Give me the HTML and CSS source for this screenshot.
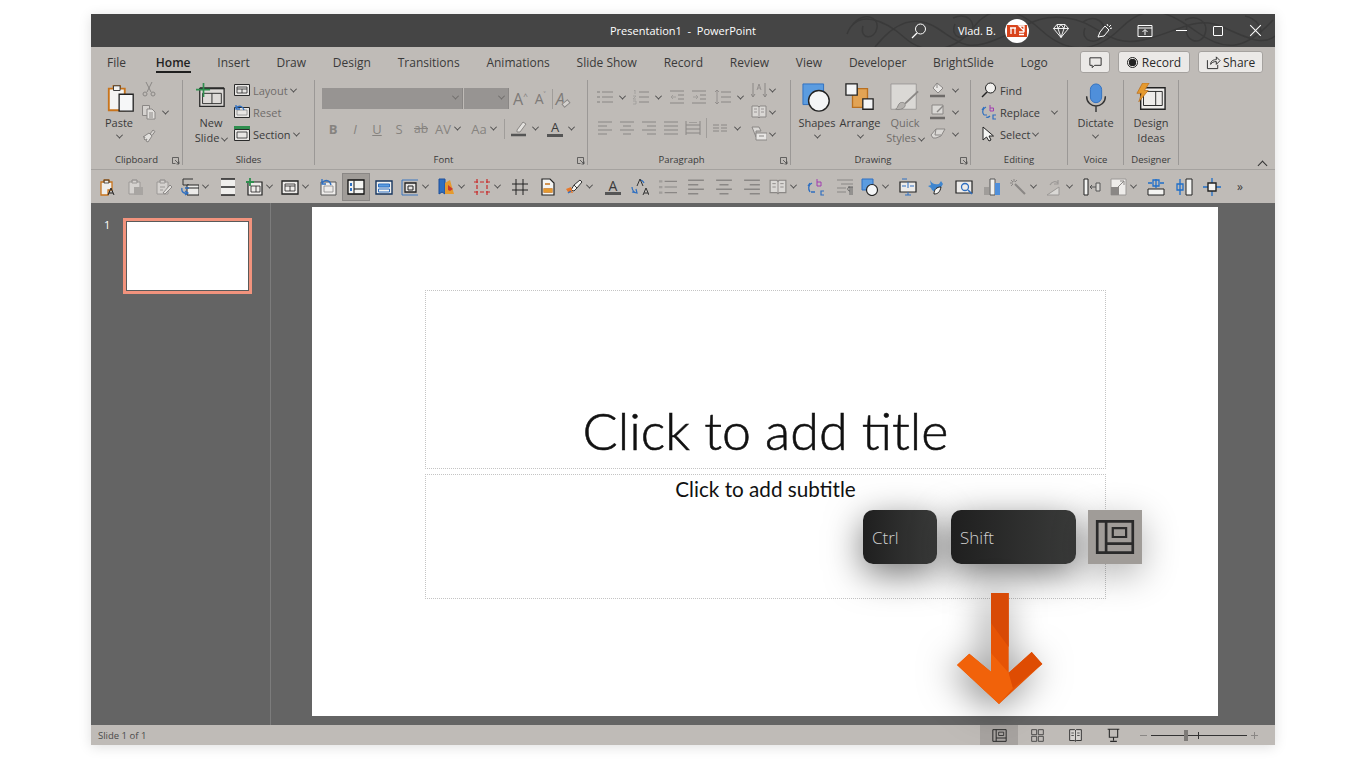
FILE: index.html

```html
<!DOCTYPE html>
<html lang="en">
<head>
    <meta charset="UTF-8">
    <title>Presentation1 - PowerPoint</title>
    <link rel="stylesheet" href="styles.css">
</head>
<body>
    <!-- icon sprites -->
    <svg class="sprites" xmlns="http://www.w3.org/2000/svg">
        <symbol id="paste" viewBox="0 0 32 32"><path d="M3 6h5V3h7v3h5v23H3z" fill="#f4f4f2" stroke="#c8741c" stroke-width="2"/><path d="M8 3h7v5H8z" fill="#f4f4f2" stroke="#333"/><path d="M14 12h15v18H14z" fill="#f6f7f8" stroke="#222" stroke-width="1.4"/></symbol>
        <symbol id="cut" viewBox="0 0 16 16"><path d="M5 1l5 10M11 1L6 11" stroke="#8a8785"/><circle cx="4" cy="13" r="2" stroke="#8a8785"/><circle cx="12" cy="13" r="2" stroke="#8a8785"/></symbol>
        <symbol id="copy" viewBox="0 0 16 16"><path d="M1.500 1.500h7v10h-7z" stroke="#8a8785" fill="#d5d2cf"/><path d="M6 5h5l3 3v7H6z" stroke="#8a8785" fill="#e3e1de"/><path d="M8 9h4M8 11h4M8 13h4" stroke="#8a8785"/></symbol>
        <symbol id="painter" viewBox="0 0 16 16"><path d="M9 7l3-4 2 1.500-3 4z" stroke="#8a8785" fill="#d5d2cf"/><path d="M2 10l6-4 3 3-4 6-2-1 1-2-2 1-1-1 1-2z" stroke="#8a8785" fill="#e3e1de"/></symbol>
        <symbol id="newslide" viewBox="0 0 32 32"><path d="M4 6h26v19H4z" fill="#dedbd8" stroke="#2a2a2a" stroke-width="1.400"/><path d="M4 5.500h26" stroke="#2a2a2a" stroke-width="2"/><path d="M7 11h20v11H7zM17 11v11" stroke="#2a2a2a"/><path d="M8 0v15M0 7h15" stroke="#2f8f4f" stroke-width="1.800"/></symbol>
        <symbol id="layout" viewBox="0 0 16 16"><path d="M.5 2.500h15v11H.5z" fill="#e8e6e4" stroke="#2a2a2a"/><path d="M3 5h10v6H3zM8 7v4M3 7h10" stroke="#2a2a2a" stroke-width=".8"/></symbol>
        <symbol id="reset" viewBox="0 0 16 16"><path d="M.5 3.500h15v10H.5z" fill="#e8e6e4" stroke="#2a2a2a"/><path d="M3 6h10v5H3z" stroke="#888" stroke-width=".8"/><path d="M2 4c3-3 7-2 8 2M2 1v4h4" stroke="#2f6fc0" stroke-width="1.300"/></symbol>
        <symbol id="section" viewBox="0 0 16 16"><path d="M.5 3.500h15v11H.5z" fill="#e8e6e4" stroke="#2a2a2a"/><path d="M3 6h10v6H3z" stroke="#2a2a2a" stroke-width=".8"/><path d="M0 1.500h16" stroke="#2f8f4f" stroke-width="3"/></symbol>
        <symbol id="shapes" viewBox="0 0 32 32"><path d="M1 1h22v22H1z" fill="#5b9ce0" stroke="#2f6fc0"/><circle cx="18" cy="19" r="11" fill="#f4f5f6" stroke="#222" stroke-width="1.500"/></symbol>
        <symbol id="arrange" viewBox="0 0 32 32"><path d="M8 6h16v20H8z" fill="#e2a354" stroke="#b96f1f" stroke-width="1.400"/><path d="M1 1h12v12H1zM19 17h11v11H19z" fill="#f4f5f6" stroke="#222" stroke-width="1.400"/></symbol>
        <symbol id="quick" viewBox="0 0 32 32"><path d="M1 1h27v27H1z" fill="#dad8d5" stroke="#9b9896"/><path d="M30 9L16 22" stroke="#8a8785" stroke-width="2"/><path d="M11 21c4-1 6 1 5 4-2 3-7 4-10 3 3-2 2-5 5-7z" fill="#b5b2af" stroke="#8a8785"/></symbol>
        <symbol id="fill" viewBox="0 0 16 16"><path d="M7 1l6 5-5 5-5-5z" fill="#e8e6e4" stroke="#8a8785"/><path d="M0 14h15" stroke="#6d6a68" stroke-width="2.500"/><path d="M7 1v5" stroke="#8a8785"/></symbol>
        <symbol id="outline" viewBox="0 0 16 16"><path d="M2 1h11v9H2z" fill="#dad8d5" stroke="#8a8785"/><path d="M13 2L7 8" stroke="#8a8785" stroke-width="1.500"/><path d="M0 14h15" stroke="#6d6a68" stroke-width="2.500"/></symbol>
        <symbol id="highlight" viewBox="0 0 16 16"><path d="M6 9l6-8 3 2-6 8-3 0z" fill="#e3e1de" stroke="#8a8785"/><path d="M0 14h15" stroke="#555" stroke-width="2.500"/></symbol>
        <symbol id="effects" viewBox="0 0 16 16"><path d="M1 9l5-6h9l-4 7-5 2H3z" fill="#dad8d5" stroke="#8a8785"/><path d="M6 3l-1 6h6" stroke="#8a8785"/></symbol>
        <symbol id="find" viewBox="0 0 16 16"><circle cx="9.500" cy="6" r="5" fill="#f2f1ef" stroke="#222"/><path d="M6 10l-5 5" stroke="#222" stroke-width="1.500"/></symbol>
        <symbol id="replace" viewBox="0 0 16 16"><path d="M5 3C1 5 1 9 3 11M1 6l2-3M5 13c2 1 3 0 4-1M3 11h3" stroke="#2f6fc0" stroke-width="1.200"/><path d="M9 1v6h3.500V4H9" stroke="#a13cb0"/><path d="M15 11h-3v4h3" stroke="#2f6fc0" stroke-width="1.200"/></symbol>
        <symbol id="select" viewBox="0 0 16 16"><path d="M2 1v13l3.500-3 2.500 4 2-1-2-4h4.500z" fill="#f4f4f2" stroke="#222"/></symbol>
        <symbol id="mic" viewBox="0 0 32 32"><rect x="10" y="1" width="12" height="20" rx="6" fill="#4f8fda" stroke="#2f6fc0"/><path d="M6 14c0 14 20 14 20 0M16 25v6" stroke="#333" stroke-width="1.500"/></symbol>
        <symbol id="ideas" viewBox="0 0 32 32"><path d="M5 5h26v23H5z" fill="#eeecea" stroke="#222" stroke-width="1.500"/><path d="M8 9h20v15H8zM21 9v15" stroke="#222"/><path d="M7 0h7L9 8h4L3 20l3-9H1z" fill="#e59a2e" stroke="#b96f1f" stroke-width=".8"/></symbol>
        <symbol id="launcher" viewBox="0 0 8 8"><path d="M.5.500h6v6M.5.500v6h3M3 3l4 4M7 4.500V7H4.500" stroke="#4a4a4a" stroke-width=".8"/></symbol>
        <symbol id="bullets" viewBox="0 0 16 16"><path d="M5 3h11M5 8h11M5 13h11" stroke="#8a8785"/><path d="M0 2h3v2H0zM0 7h3v2H0zM0 12h3v2H0z" fill="#a09d9a"/></symbol>
        <symbol id="numbers" viewBox="0 0 16 16"><path d="M6 3h10M6 8h10M6 13h10" stroke="#8a8785"/><path d="M1 2l1-1v4M0 7h3L0 10h3M0 12h3v3H0" stroke="#a09d9a" stroke-width=".8"/></symbol>
        <symbol id="indent-less" viewBox="0 0 16 16"><path d="M1 2h14M9 6h6M9 10h6M1 14h14" stroke="#8a8785"/><path d="M7 8H2M4 6L2 8l2 2" stroke="#a09d9a"/></symbol>
        <symbol id="indent-more" viewBox="0 0 16 16"><path d="M1 2h14M9 6h6M9 10h6M1 14h14" stroke="#8a8785"/><path d="M2 8h5M5 6l2 2-2 2" stroke="#a09d9a"/></symbol>
        <symbol id="spacing" viewBox="0 0 16 16"><path d="M6 3h10M6 8h10M6 13h10" stroke="#8a8785"/><path d="M2 1v14M0 3l2-2 2 2M0 13l2 2 2-2" stroke="#8a8785" stroke-width=".8"/></symbol>
        <symbol id="textdir" viewBox="0 0 16 16"><path d="M2 1v14M0 12l2 3 2-3M14 1v14M12 12l2 3 2-3" stroke="#8a8785"/><path d="M6 8l2-6 2 6M7 6h2" stroke="#8a8785" stroke-width=".8"/></symbol>
        <symbol id="book" viewBox="0 0 16 16"><path d="M1 2h6l1 1 1-1h6v11H9l-1 1-1-1H1z" fill="#dad8d5" stroke="#8a8785"/><path d="M8 3v11M3 5h3M3 8h3M10 5h3M10 8h3" stroke="#8a8785" stroke-width=".8"/></symbol>
        <symbol id="smartart" viewBox="0 0 16 16"><path d="M1 1h7l2 4H5v6z" fill="#dad8d5" stroke="#8a8785"/><path d="M5 7h11v7H5z" fill="#e8e6e4" stroke="#8a8785"/><path d="M8 10h5" stroke="#8a8785"/></symbol>
        <symbol id="align-l" viewBox="0 0 16 16"><path d="M1 2h14M1 6h9M1 10h14M1 14h9" stroke="#8a8785" stroke-width="1.200"/></symbol>
        <symbol id="align-c" viewBox="0 0 16 16"><path d="M1 2h14M4 6h8M1 10h14M4 14h8" stroke="#8a8785" stroke-width="1.200"/></symbol>
        <symbol id="align-r" viewBox="0 0 16 16"><path d="M1 2h14M6 6h9M1 10h14M6 14h9" stroke="#8a8785" stroke-width="1.200"/></symbol>
        <symbol id="align-j" viewBox="0 0 16 16"><path d="M1 2h14M1 6h14M1 10h14M1 14h14" stroke="#8a8785" stroke-width="1.200"/></symbol>
        <symbol id="distribute" viewBox="0 0 16 16"><path d="M1 1v14M15 1v14M1 5h14M1 9h14M1 13h14" stroke="#8a8785"/><path d="M4 2.500h8" stroke="#a09d9a"/></symbol>
        <symbol id="columns" viewBox="0 0 16 16"><path d="M1 5h6M9 5h6M1 8h6M9 8h6M1 11h6M9 11h6" stroke="#8a8785"/></symbol>
        <symbol id="paste-a" viewBox="0 0 18 18"><path d="M2 4h3V2h5v2h3v8H9v5H2z" fill="#efeeec" stroke="#c8741c" stroke-width="1.300"/><path d="M5 2h5v3H5z" stroke="#333" stroke-width=".8"/><path d="M9 17l3-7 3 7M10 15h4" stroke="#222"/></symbol>
        <symbol id="paste-g" viewBox="0 0 18 18"><path d="M2 4h3V2h5v2h3v12H2z" fill="#d5d2cf" stroke="#9b9896"/><path d="M5 2h5v3H5z" stroke="#9b9896"/><path d="M7 9h9v8H7z" fill="#a8a5a2"/></symbol>
        <symbol id="paste-e" viewBox="0 0 18 18"><path d="M2 4h3V2h5v2h3v12H2z" fill="#d5d2cf" stroke="#9b9896"/><path d="M5 2h5v3H5zM5 9h5M5 12h3" stroke="#9b9896"/><path d="M8 15l7-8 2 2-7 7z" fill="#e3e1de" stroke="#8a8785"/></symbol>
        <symbol id="switch" viewBox="0 0 18 18"><path d="M2 1h10M2 1v6h6" stroke="#333"/><path d="M6 7h12v10H6z" fill="#ecebe9" stroke="#222"/><path d="M6 10h12" stroke="#222"/><path d="M1 10c-1 4 2 6 6 5M4 17l3-2-3-2M8 10H4" stroke="#2f6fc0" stroke-width="1.300"/></symbol>
        <symbol id="hlines" viewBox="0 0 18 18"><path d="M2 1h14v16H2z" fill="#f0efed"/><path d="M2 1h14M2 9h14M2 17h14" stroke="#222" stroke-width="1.600"/></symbol>
        <symbol id="newslide-s" viewBox="0 0 18 18"><path d="M3 4h14v13H3z" fill="#eeecea" stroke="#222" stroke-width="1.200"/><path d="M6 8h9v6H6zM11 8v6" stroke="#222" stroke-width=".8"/><path d="M5 0v8M1 4h8" stroke="#2f8f4f" stroke-width="1.800"/></symbol>
        <symbol id="layout-s" viewBox="0 0 18 18"><path d="M1 3h16v13H1z" fill="#eeecea" stroke="#222" stroke-width="1.300"/><path d="M4 6h10v7H4zM9 8v5M4 8h10" stroke="#222" stroke-width=".8"/></symbol>
        <symbol id="reset-s" viewBox="0 0 18 18"><path d="M2 4h15v13H2z" fill="#eeecea" stroke="#555"/><path d="M5 8h9v6H5z" stroke="#888" stroke-width=".8"/><path d="M3 5c3-4 8-3 9 2M3 1v5h4" stroke="#2f6fc0" stroke-width="1.300"/></symbol>
        <symbol id="slot" viewBox="0 0 18 18"><path d="M1 2h16v14H1z" fill="#f4f4f2" stroke="#111" stroke-width="1.300"/><path d="M7 2.500v13" stroke="#111"/><path d="M3 5h2v3H3zM3 10h2v3H3z" fill="#2f6fc0"/><path d="M7 11h10" stroke="#111"/></symbol>
        <symbol id="bluebox" viewBox="0 0 18 18"><path d="M1 3h16v13H1z" fill="#f1f1ef" stroke="#17365f" stroke-width="1.400"/><path d="M3.500 6h11v3h-11z" fill="#5b9ce0" stroke="#2f6fc0"/><path d="M3.500 11h11v3h-11z" fill="#f4f4f2" stroke="#2f6fc0"/></symbol>
        <symbol id="frame" viewBox="0 0 18 18"><path d="M1 2h16M1 17h16M1 2v15" stroke="#2f6fc0" stroke-width=".9"/><path d="M4 5h11v9H4z" fill="#e8e6e4" stroke="#222" stroke-width="1.300"/><path d="M7 8h5v4H7z" stroke="#222"/></symbol>
        <symbol id="bookmark" viewBox="0 0 18 18"><path d="M2 1h6v15l-3-2-3 2z" fill="#2f6fc0" stroke="#1f4f99"/><path d="M8 5l5-3 4 14H8z" fill="#e59a2e"/><path d="M11 7l5 4-3 2-2-1z" fill="#c83a2e"/></symbol>
        <symbol id="crop" viewBox="0 0 18 18"><path d="M4 1v16M14 1v16M1 4h16M1 14h16" stroke="#c92a2a" stroke-width="1.200" stroke-dasharray="4 2"/></symbol>
        <symbol id="hash" viewBox="0 0 18 18"><path d="M5 1v16M12 1v16M1 6h16M1 12h16" stroke="#222"/></symbol>
        <symbol id="doc-o" viewBox="0 0 18 18"><path d="M3 1h8l4 4v12H3z" fill="#f4f4f2" stroke="#222" stroke-width="1.200"/><path d="M6 6h5M5 11h8v3H5z" stroke="#c8741c" stroke-width="1.300"/><path d="M5 11h8v3H5z" fill="#e59a2e"/></symbol>
        <symbol id="brush-c" viewBox="0 0 18 18"><path d="M9 7l6-5 2 2-5 6z" fill="#f4f4f2" stroke="#333"/><path d="M9 7l3 3-3 3-3-1z" fill="#f4f4f2" stroke="#333"/><path d="M1 11l5-2 2 6-5-1z" fill="#e8782a"/><path d="M3 15l3-2" stroke="#2f6fc0" stroke-width="1.500"/></symbol>
        <symbol id="translate" viewBox="0 0 18 18"><path d="M1 9c0 3 2 6 5 6M1 14l5 1-1-4M9 2c2 0 3 1 4 3" stroke="#2f6fc0" stroke-width="1.200"/><path d="M6 8l3-7 3 7M12 17l3-7 3 7M13 15h4" stroke="#333"/></symbol>
        <symbol id="replace-q" viewBox="0 0 18 18"><path d="M5 5C1 7 1 11 3 14M1 8l2-3M4 14h4" stroke="#2f6fc0" stroke-width="1.300"/><path d="M10 1v7h4V4h-4" stroke="#a13cb0"/><path d="M17 13h-3v4h3" stroke="#2f6fc0" stroke-width="1.200"/></symbol>
        <symbol id="para" viewBox="0 0 18 18"><path d="M2 2h16M6 6h12M2 10h9M2 14h9" stroke="#8a8785" stroke-width="1.200"/><path d="M13 9h5M15 9v8M17 9v8M15 13c-3 0-3-4 0-4" stroke="#666"/></symbol>
        <symbol id="shapes-s" viewBox="0 0 18 18"><path d="M1 1h11v11H1z" fill="#5b9ce0" stroke="#2f6fc0"/><circle cx="11" cy="12" r="5.500" fill="#f4f5f6" stroke="#222" stroke-width="1.200"/></symbol>
        <symbol id="monitor" viewBox="0 0 18 18"><path d="M1 4h16v10H1z" fill="#eeecea" stroke="#222" stroke-width="1.200"/><path d="M3 1h5M9 14v3M6 17h6" stroke="#2f6fc0"/><path d="M9 4v6M3 8h4M11 8h4" stroke="#2f6fc0"/></symbol>
        <symbol id="bird" viewBox="0 0 18 18"><path d="M3 2c2 4 5 5 9 4l2-3 2 3-3 5c-3 4-8 3-9-1L1 8l3-1z" fill="#3f86cf"/><path d="M7 16c0-5 3-7 7-7-1 5-3 7-7 7z" fill="#f4f4f2" stroke="#222"/></symbol>
        <symbol id="picsearch" viewBox="0 0 18 18"><path d="M1 3h16v12H1z" fill="#eeecea" stroke="#222" stroke-width="1.200"/><circle cx="10" cy="9" r="3.500" stroke="#2f6fc0" stroke-width="1.300"/><path d="M13 12l4 4" stroke="#2f6fc0" stroke-width="1.600"/></symbol>
        <symbol id="chart" viewBox="0 0 18 18"><path d="M1 9h5v8H1z" fill="#a09d9a"/><path d="M7 1h5v16H7z" fill="#f1f1ef" stroke="#555"/><path d="M12 5h5v12h-5z" fill="#4f8fda"/></symbol>
        <symbol id="wand" viewBox="0 0 18 18"><path d="M6 6l10 10" stroke="#8a8785" stroke-width="2"/><path d="M5 1v3M1 5h3M8 2L6 4M2 2l2 2M2 8l2-2" stroke="#8a8785"/></symbol>
        <symbol id="flip" viewBox="0 0 18 18"><path d="M2 17L14 9v8z" fill="#dad8d5" stroke="#9b9896"/><path d="M5 7c2-4 6-4 8-2M13 2v4H9" stroke="#9b9896" stroke-width="1.200"/></symbol>
        <symbol id="coldist" viewBox="0 0 18 18"><path d="M1 1h4v16H1z" fill="#f4f4f2" stroke="#222"/><path d="M8 9h5M7 9l2-2M7 9l2 2" stroke="#555"/><path d="M13 5h4v8h-4z" fill="#dad8d5" stroke="#555"/></symbol>
        <symbol id="resize" viewBox="0 0 18 18"><path d="M2 1h15v16H2z" fill="#eeecea" stroke="#9b9896"/><path d="M2 9h8v8H2z" fill="#8a8785"/><path d="M9 9l6-6M11 3h4v4" stroke="#8a8785"/></symbol>
        <symbol id="align-b" viewBox="0 0 18 18"><path d="M1 11h16v6H1z" fill="#f4f4f2" stroke="#222"/><path d="M9 1v9M6 2h6v6H6zM1 5h4M13 5h4" stroke="#1f6fc9" stroke-width="1.300"/></symbol>
        <symbol id="align-v" viewBox="0 0 18 18"><path d="M11 1h6v16h-6z" fill="#f4f4f2" stroke="#222"/><path d="M5 1v16M2 6h6v6H2z" stroke="#1f6fc9" stroke-width="1.300"/></symbol>
        <symbol id="target" viewBox="0 0 18 18"><path d="M9 0v18M0 9h18" stroke="#1f6fc9" stroke-width="1.300"/><path d="M5 5h8v8H5z" fill="#f4f4f2" stroke="#222" stroke-width="1.400"/></symbol>
        <symbol id="normal" viewBox="0 0 18 18"><path d="M1 2h16v14H1zM5 2v14M5 12h12" stroke="#2a2a2a" stroke-width="1.200"/><path d="M8 5h6v4H8z" stroke="#2a2a2a" stroke-width="1"/></symbol>
        <symbol id="sorter" viewBox="0 0 18 18"><path d="M2 2h6v6H2zM10 2h6v6h-6zM2 10h6v6H2zM10 10h6v6h-6z" stroke="#3a3a3a"/></symbol>
        <symbol id="reading" viewBox="0 0 18 18"><path d="M2 2h6l1 1 1-1h6v13h-6l-1 1-1-1H2z" fill="#d5d2cf" stroke="#2a2a2a" stroke-width="1.100"/><path d="M9 3v13M4 6h3M4 9h3M11 6h3M11 9h3" stroke="#2a2a2a" stroke-width=".9"/></symbol>
        <symbol id="show" viewBox="0 0 18 18"><path d="M2 1.500h14M4 2v9h10V2M9 11v4M5 16h8" stroke="#2a2a2a" stroke-width="1.300"/></symbol>
        <symbol id="tb-search" viewBox="0 0 16 16"><circle cx="9.500" cy="6" r="5" stroke="#fff"/><path d="M6 10l-5 5" stroke="#fff" stroke-width="1.300"/></symbol>
        <symbol id="tb-diamond" viewBox="0 0 16 16"><path d="M4 1.500h8l3.500 4L8 14.500.5 5.500zM.5 5.500h15M5 5.500l3 9 3-9M4 1.500l1 4 3-4 3 4 1-4" stroke="#fff" stroke-width=".9"/></symbol>
        <symbol id="tb-pen" viewBox="0 0 16 16"><path d="M1 14l2-5 5-6 4 4-5 6zM10 1l1 2M14 2l-2 2M15 5l-2 .500" stroke="#fff"/></symbol>
        <symbol id="tb-display" viewBox="0 0 16 16"><path d="M1 2.500h14v11H1zM1 5h14" stroke="#fff"/><path d="M8 12V7M5.500 9L8 6.500 10.500 9" stroke="#fff"/></symbol>
        <symbol id="tb-office" viewBox="0 0 20 16"><path d="M0 2h20v12H0z" fill="#d9441c"/><path d="M3 5h6M4 5v6M8 5v6M12 3h5v5l-5-5zM12 9h5M12 11.500h5" stroke="#fff" stroke-width="1.300"/></symbol>
        <symbol id="comment" viewBox="0 0 16 16"><path d="M2 3h12v8H7l-2.500 2.500V11H2z" stroke="#2a2a2a"/></symbol>
        <symbol id="share" viewBox="0 0 16 16"><path d="M1.500 5.500v9h11v-4M5 10c0-4 3-5 6-5V2l4 4-4 4V7c-3 0-5 1-6 3z" stroke="#2a2a2a"/></symbol>
    </svg>

    <div class="window">
        <div class="titlebar">
            <svg class="title-pattern" viewBox="0 0 430 33" preserveAspectRatio="none">
                <path d="M2 20C12-6 40 6 60 24S110 38 128 14 170-8 196 16 250 40 276 14 322-4 352 18 402 34 428 6" />
                <path d="M30 33C50 8 70 0 92 14S120 38 150 26 190 0 222 4 262 34 298 26 350 0 380 14 420 30 430 22" />
                <path d="M8 10c10-12 26-8 24 4S14 26 18 12M108 4c14-6 24 4 18 14s-22 6-16-8M238 8c12-8 24 0 20 12s-24 8-18-6M340 6c12-6 24 2 20 14s-22 8-18-8M400 2c10 2 20 12 14 22" />
            </svg>
            <div class="doc-title">Presentation1 &nbsp;-&nbsp; PowerPoint</div>
            <div class="title-controls">
                <svg class="tb-icon tb-search"><use href="#tb-search"/></svg>
                <span class="user-name">Vlad. B.</span>
                <span class="avatar"><svg class="avatar-logo"><use href="#tb-office"/></svg></span>
                <svg class="tb-icon tb-diamond"><use href="#tb-diamond"/></svg>
                <svg class="tb-icon tb-pen"><use href="#tb-pen"/></svg>
                <svg class="tb-icon tb-display"><use href="#tb-display"/></svg>
                <span class="win-min"></span>
                <span class="win-max"></span>
                <span class="win-close"></span>
            </div>
        </div>

        <div class="tabbar">
            <nav class="tabs">
                <span class="tab">File</span>
                <span class="tab active">Home</span>
                <span class="tab">Insert</span>
                <span class="tab">Draw</span>
                <span class="tab">Design</span>
                <span class="tab">Transitions</span>
                <span class="tab">Animations</span>
                <span class="tab">Slide Show</span>
                <span class="tab">Record</span>
                <span class="tab">Review</span>
                <span class="tab">View</span>
                <span class="tab">Developer</span>
                <span class="tab">BrightSlide</span>
                <span class="tab">Logo</span>
            </nav>
            <div class="tab-actions">
                <button class="pill pill-comment"><svg class="i15"><use href="#comment"/></svg></button>
                <button class="pill pill-record"><span class="rec-dot"></span>Record</button>
                <button class="pill pill-share"><svg class="i15"><use href="#share"/></svg>Share</button>
            </div>
        </div>

        <div class="ribbon">
            <section class="group g-clipboard">
                <div class="group-body">
                    <div class="big-btn b-paste">
                        <svg class="i30"><use href="#paste"/></svg>
                        <span>Paste</span>
                        <i class="caret"></i>
                    </div>
                    <div class="stack stack-clip">
                        <svg class="i16"><use href="#cut"/></svg>
                        <span class="row"><svg class="i16"><use href="#copy"/></svg><i class="caret"></i></span>
                        <svg class="i16"><use href="#painter"/></svg>
                    </div>
                </div>
                <div class="group-label">Clipboard</div>
                <svg class="launcher"><use href="#launcher"/></svg>
            </section>

            <section class="group g-slides">
                <div class="group-body">
                    <div class="big-btn b-new">
                        <svg class="i30"><use href="#newslide"/></svg>
                        <span>New</span>
                        <span>Slide <i class="caret"></i></span>
                    </div>
                    <div class="stack stack-slides">
                        <span class="row muted"><svg class="i16"><use href="#layout"/></svg>Layout <i class="caret"></i></span>
                        <span class="row muted"><svg class="i16"><use href="#reset"/></svg>Reset</span>
                        <span class="row"><svg class="i16"><use href="#section"/></svg>Section <i class="caret"></i></span>
                    </div>
                </div>
                <div class="group-label">Slides</div>
            </section>

            <section class="group g-font">
                <div class="font-grid">
                    <div class="font-row">
                        <div class="combo combo-name"><i class="caret"></i></div>
                        <div class="combo combo-size"><i class="caret"></i></div>
                        <span class="glyph glyph-grow">A<sup>^</sup></span>
                        <span class="glyph glyph-shrink">A<sup>˅</sup></span>
                        <span class="v-sep"></span>
                        <span class="glyph glyph-clear">A<i class="eraser"></i></span>
                    </div>
                    <div class="font-row font-row-2">
                        <b class="fmt">B</b>
                        <em class="fmt">I</em>
                        <u class="fmt">U</u>
                        <span class="fmt">S</span>
                        <s class="fmt fmt-small">ab</s>
                        <span class="fmt fmt-av">AV</span><i class="caret"></i>
                        <span class="fmt fmt-aa">Aa</span><i class="caret"></i>
                        <span class="v-sep v-sep-2"></span>
                        <span class="row swatch-tool"><svg class="i16"><use href="#highlight"/></svg><i class="caret"></i></span>
                        <span class="row swatch-tool"><span class="font-color">A</span><i class="caret"></i></span>
                    </div>
                </div>
                <div class="group-label has-launcher">Font</div>
                <svg class="launcher"><use href="#launcher"/></svg>
            </section>

            <section class="group g-para">
                <div class="group-body">
                    <div class="para-left">
                        <div class="row para-row">
                            <svg class="i16"><use href="#bullets"/></svg><i class="caret"></i>
                            <svg class="i16 gap-l"><use href="#numbers"/></svg><i class="caret"></i>
                            <svg class="i16 gap-l"><use href="#indent-less"/></svg>
                            <svg class="i16 gap-m"><use href="#indent-more"/></svg>
                            <svg class="i16 gap-l"><use href="#spacing"/></svg><i class="caret"></i>
                        </div>
                        <div class="row para-row para-row-2">
                            <svg class="i16"><use href="#align-l"/></svg>
                            <svg class="i16 gap-m"><use href="#align-c"/></svg>
                            <svg class="i16 gap-m"><use href="#align-r"/></svg>
                            <svg class="i16 gap-m"><use href="#align-j"/></svg>
                            <svg class="i16 gap-m"><use href="#distribute"/></svg>
                            <span class="v-sep v-sep-3"></span>
                            <svg class="i16"><use href="#columns"/></svg><i class="caret"></i>
                        </div>
                    </div>
                    <div class="stack stack-para">
                        <span class="row"><svg class="i16"><use href="#textdir"/></svg><i class="caret"></i></span>
                        <span class="row"><svg class="i16"><use href="#book"/></svg><i class="caret"></i></span>
                        <span class="row"><svg class="i16"><use href="#smartart"/></svg><i class="caret"></i></span>
                    </div>
                </div>
                <div class="group-label has-launcher">Paragraph</div>
                <svg class="launcher"><use href="#launcher"/></svg>
            </section>

            <section class="group g-drawing">
                <div class="group-body">
                    <div class="big-btn b-shapes">
                        <svg class="i30"><use href="#shapes"/></svg>
                        <span>Shapes</span>
                        <i class="caret"></i>
                    </div>
                    <div class="big-btn b-arrange">
                        <svg class="i30"><use href="#arrange"/></svg>
                        <span>Arrange</span>
                        <i class="caret"></i>
                    </div>
                    <div class="big-btn b-quick muted">
                        <svg class="i30"><use href="#quick"/></svg>
                        <span>Quick</span>
                        <span>Styles <i class="caret"></i></span>
                    </div>
                    <div class="stack stack-draw">
                        <span class="row"><svg class="i16"><use href="#fill"/></svg><i class="caret"></i></span>
                        <span class="row"><svg class="i16"><use href="#outline"/></svg><i class="caret"></i></span>
                        <span class="row"><svg class="i16"><use href="#effects"/></svg><i class="caret"></i></span>
                    </div>
                </div>
                <div class="group-label has-launcher">Drawing</div>
                <svg class="launcher"><use href="#launcher"/></svg>
            </section>

            <section class="group g-editing">
                <div class="stack stack-edit">
                    <span class="row"><svg class="i16"><use href="#find"/></svg>Find</span>
                    <span class="row"><svg class="i16"><use href="#replace"/></svg>Replace <i class="caret caret-far"></i></span>
                    <span class="row"><svg class="i16"><use href="#select"/></svg>Select <i class="caret"></i></span>
                </div>
                <div class="group-label">Editing</div>
            </section>

            <section class="group g-voice">
                <div class="big-btn">
                    <svg class="i30"><use href="#mic"/></svg>
                    <span>Dictate</span>
                    <i class="caret"></i>
                </div>
                <div class="group-label">Voice</div>
            </section>

            <section class="group g-designer">
                <div class="big-btn">
                    <svg class="i30"><use href="#ideas"/></svg>
                    <span>Design</span>
                    <span>Ideas</span>
                </div>
                <div class="group-label">Designer</div>
            </section>

            <i class="ribbon-collapse"></i>
        </div>

        <div class="qat">
            <span class="q"><svg><use href="#paste-a"/></svg></span>
            <span class="q"><svg><use href="#paste-g"/></svg></span>
            <span class="q"><svg><use href="#paste-e"/></svg></span>
            <span class="q qc"><svg><use href="#switch"/></svg><i class="caret"></i></span>
            <span class="q"><svg><use href="#hlines"/></svg></span>
            <span class="q qc"><svg><use href="#newslide-s"/></svg><i class="caret"></i></span>
            <span class="q qc"><svg><use href="#layout-s"/></svg><i class="caret"></i></span>
            <span class="q"><svg><use href="#reset-s"/></svg></span>
            <span class="q q-on"><svg><use href="#slot"/></svg></span>
            <span class="q"><svg><use href="#bluebox"/></svg></span>
            <span class="q qc"><svg><use href="#frame"/></svg><i class="caret"></i></span>
            <span class="q qc"><svg><use href="#bookmark"/></svg><i class="caret"></i></span>
            <span class="q qc"><svg><use href="#crop"/></svg><i class="caret"></i></span>
            <span class="q"><svg><use href="#hash"/></svg></span>
            <span class="q"><svg><use href="#doc-o"/></svg></span>
            <span class="q qc"><svg><use href="#brush-c"/></svg><i class="caret"></i></span>
            <span class="q"><span class="font-color font-color-q">A</span></span>
            <span class="q"><svg><use href="#translate"/></svg></span>
            <span class="q"><svg><use href="#bullets"/></svg></span>
            <span class="q"><svg><use href="#align-l"/></svg></span>
            <span class="q"><svg><use href="#align-c"/></svg></span>
            <span class="q"><svg><use href="#align-r"/></svg></span>
            <span class="q qc"><svg><use href="#book"/></svg><i class="caret"></i></span>
            <span class="q"><svg><use href="#replace-q"/></svg></span>
            <span class="q"><svg><use href="#para"/></svg></span>
            <span class="q qc"><svg><use href="#shapes-s"/></svg><i class="caret"></i></span>
            <span class="q"><svg><use href="#monitor"/></svg></span>
            <span class="q"><svg><use href="#bird"/></svg></span>
            <span class="q"><svg><use href="#picsearch"/></svg></span>
            <span class="q"><svg><use href="#chart"/></svg></span>
            <span class="q qc"><svg><use href="#wand"/></svg><i class="caret"></i></span>
            <span class="q qc"><svg><use href="#flip"/></svg><i class="caret"></i></span>
            <span class="q"><svg><use href="#coldist"/></svg></span>
            <span class="q qc"><svg><use href="#resize"/></svg><i class="caret"></i></span>
            <span class="q"><svg><use href="#align-b"/></svg></span>
            <span class="q"><svg><use href="#align-v"/></svg></span>
            <span class="q"><svg><use href="#target"/></svg></span>
            <span class="q q-more">»</span>
        </div>

        <div class="workspace">
            <aside class="thumbs">
                <span class="thumb-num">1</span>
                <div class="thumb"></div>
            </aside>
            <main class="stage">
                <div class="slide">
                    <div class="ph ph-title">Click to add title</div>
                    <div class="ph ph-sub">Click to add subtitle</div>
                </div>
            </main>
        </div>

        <footer class="statusbar">
            <span class="status-text">Slide 1 of 1</span>
            <div class="status-views">
                <span class="view view-on"><svg class="i15"><use href="#normal"/></svg></span>
                <span class="view"><svg class="i15"><use href="#sorter"/></svg></span>
                <span class="view"><svg class="i15"><use href="#reading"/></svg></span>
                <span class="view"><svg class="i15"><use href="#show"/></svg></span>
            </div>
            <div class="zoom">
                <span class="zoom-btn"></span>
                <div class="zoom-track"><i class="zoom-thumb"></i><i class="zoom-tick"></i></div>
                <span class="zoom-btn zoom-plus"></span>
            </div>
        </footer>
    </div>

    <!-- overlay: shortcut keys and arrow, they sit above the window -->
    <div class="shortcut">
        <span class="key key-ctrl">Ctrl</span>
        <span class="key key-shift">Shift</span>
        <span class="key-icon"><svg><use href="#normal"/></svg></span>
    </div>
    <svg class="big-arrow" viewBox="0 0 86 112">
        <path d="M34 0h17.700v79.700L74.700 59l10.600 12L42 111 0 72l12.300-11.300L34 78.700z" fill="#e65405"/>
        <path d="M34 0h17.700v54L34 30z" fill="#d84a06"/>
        <path d="M0 72l12.300-11.300L34 78.700V60l17.700 19.700L56 95l-14 16z" fill="#f1620a"/>
        <path d="M51.700 79.700L74.700 59l10.600 12L56 95z" fill="#de4c03"/>
    </svg>
</body>
</html>
```

FILE: styles.css

```css
* {
    margin: 0;
    padding: 0;
    box-sizing: border-box;
}
html, body {
    height: 100%;
    overflow: hidden;
}
body {
    background: #fff;
    font-family: 'Open Sans', 'Noto Sans', sans-serif;
    font-size: 11px;
    color: #3a3a3a;
    padding: 14px 91px 0;
}
svg {
    fill: none;
    display: block;
    flex: none;
}
.sprites {
    display: none;
}
.i15 { width: 15px; height: 15px; }
.i16 { width: 16px; height: 16px; }
.i30 { width: 30px; height: 30px; }

.caret {
    display: inline-block;
    flex: none;
    width: 5px;
    height: 5px;
    border-right: 1px solid #4a4a4a;
    border-bottom: 1px solid #4a4a4a;
    transform: rotate(45deg) translate(-1px, -1px);
}

.window {
    width: 1184px;
    height: 731px;
    display: flex;
    flex-direction: column;
    background: #646464;
    box-shadow: 0 2px 12px rgba(0, 0, 0, 0.13);
}

/* title bar */
.titlebar {
    position: relative;
    height: 33px;
    flex: none;
    display: flex;
    align-items: center;
    background: #454545;
    color: #fff;
    padding-left: 519px;
}
.title-pattern {
    position: absolute;
    right: 0;
    top: 0;
    width: 430px;
    height: 33px;
}
.title-pattern path {
    stroke: #3a3a3a;
    stroke-width: 1.5;
}
.doc-title {
    position: relative;
    font-size: 11px;
}
.title-controls {
    position: relative;
    display: flex;
    align-items: center;
    flex: 1;
}
.tb-icon {
    width: 16px;
    height: 16px;
}
.tb-search { margin-left: 155px; }
.user-name { margin-left: 31px; font-size: 11px; }
.avatar {
    width: 24px;
    height: 24px;
    border-radius: 50%;
    background: #fff;
    margin-left: 9px;
    display: flex;
    align-items: center;
    justify-content: center;
}
.avatar-logo {
    width: 20px;
    height: 16px;
}
.tb-diamond { margin-left: 24px; }
.tb-pen { margin-left: 28px; }
.tb-display { margin-left: 24px; }
.win-min {
    width: 11px;
    height: 1px;
    background: #fff;
    margin-left: 23px;
}
.win-max {
    width: 10px;
    height: 10px;
    border: 1px solid #fff;
    border-radius: 1px;
    margin-left: 26px;
}
.win-close {
    position: relative;
    width: 11px;
    height: 11px;
    margin-left: 27px;
}
.win-close::before,
.win-close::after {
    content: "";
    position: absolute;
    left: -2px;
    top: 5px;
    width: 15px;
    height: 1px;
    background: #fff;
    transform: rotate(45deg);
}
.win-close::after {
    transform: rotate(-45deg);
}

/* tabs */
.tabbar {
    height: 30px;
    flex: none;
    display: flex;
    justify-content: space-between;
    background: #bfbbb7;
    padding: 0 12px 0 16px;
}
.tabs {
    display: flex;
    gap: 26.8px;
    font-size: 12px;
}
.tab {
    line-height: 31px;
    height: 26px;
    white-space: nowrap;
}
.tab.active {
    font-weight: 600;
    color: #222;
    border-bottom: 2.5px solid #1f1f1f;
    margin-left: 3px;
}
.tab-actions {
    display: flex;
    gap: 8px;
    padding-top: 4px;
}
.pill {
    height: 22px;
    display: flex;
    align-items: center;
    justify-content: center;
    gap: 4px;
    font: inherit;
    font-size: 12px;
    color: #2a2a2a;
    background: #ebe9e7;
    border: 1px solid #a5a29f;
    border-radius: 3px;
}
.pill-comment { width: 30px; }
.pill-record { width: 72px; }
.pill-share {
    width: 65px;
    justify-content: flex-start;
    padding-left: 7px;
    gap: 2px;
}
.rec-dot {
    width: 11px;
    height: 11px;
    border-radius: 50%;
    border: 1px solid #222;
    background: radial-gradient(circle, #222 3.5px, transparent 4px);
}

/* ribbon */
.ribbon {
    position: relative;
    height: 93px;
    flex: none;
    display: flex;
    background: #bfbbb7;
    padding: 3px 0 0 0;
    border-bottom: 1px solid #a5a29f;
}
.group {
    position: relative;
    height: 85px;
    flex: none;
    border-right: 1px solid #9b9896;
}
.group-label {
    position: absolute;
    left: 0;
    right: 0;
    bottom: -2px;
    text-align: center;
    font-size: 9.5px;
    line-height: 14px;
}
.has-launcher {
    padding-right: 15px;
}
.launcher {
    position: absolute;
    right: 2px;
    bottom: 0;
    width: 8px;
    height: 8px;
}
.group-body {
    display: flex;
    height: 70px;
}
.g-clipboard { width: 92px; }
.g-slides { width: 132px; }
.g-font { width: 273px; }
.g-para { width: 203px; }
.g-drawing { width: 180px; }
.g-editing { width: 97px; }
.g-voice { width: 56px; }
.g-designer { width: 55px; }

.big-btn {
    display: flex;
    flex-direction: column;
    align-items: center;
    line-height: 15px;
    font-size: 11px;
    white-space: nowrap;
}
.big-btn .i30 {
    margin-top: 3px;
    margin-bottom: 2px;
}
.big-btn > .caret {
    margin-top: 4px;
}
.muted {
    color: #6f6c6a;
}
.b-paste { width: 44px; margin-left: 6px; }
.b-paste .i30 { margin-left: 4px; }
.b-new { width: 54px; margin-left: 1px; }
.b-shapes { width: 42px; margin-left: 5px; }
.b-arrange { width: 44px; }
.b-quick { width: 44px; margin-left: 1px; }
.g-voice .big-btn,
.g-designer .big-btn {
    width: 100%;
}

.row {
    display: flex;
    align-items: center;
    gap: 3px;
    white-space: nowrap;
}
.stack {
    display: flex;
    flex-direction: column;
    justify-content: space-between;
}
.stack-clip {
    height: 62px;
    padding-top: 1px;
    box-sizing: content-box;
}
.stack-clip .row { gap: 6px; }
.stack-slides {
    height: 62px;
    padding-top: 2px;
    margin-left: -4px;
}
.stack-para {
    height: 60px;
    margin: 2px 0 0 2px;
}
.stack-para .row { gap: 3px; }
.stack-draw {
    height: 60px;
    margin: 2px 0 0 3px;
}
.stack-draw .row { gap: 7px; }
.stack-edit {
    height: 60px;
    margin: 2px 0 0 10px;
}
.caret-far { margin-left: 9px; }

/* font group */
.font-grid {
    padding: 8px 0 0 7px;
}
.font-row {
    display: flex;
    align-items: center;
    height: 21px;
    color: #86837f;
}
.font-row > * {
    flex: none;
}
.font-row-2 {
    margin-top: 9px;
}
.combo {
    position: relative;
    height: 21px;
    background: #979492;
    border-right: 1px solid #8a8785;
    margin-right: 1px;
}
.combo .caret {
    position: absolute;
    right: 4px;
    top: 7px;
    border-color: #6f6c6a;
}
.combo-name { width: 141px; }
.combo-size { width: 45px; }
.glyph {
    font-size: 16px;
    color: #7d7a77;
}
.glyph sup {
    font-size: 8px;
    line-height: 0;
    vertical-align: 6px;
}
.glyph-grow { margin-left: 3px; }
.glyph-shrink { margin-left: 7px; font-size: 14px; }
.glyph-clear { position: relative; margin-left: 3px; font-style: italic; }
.eraser {
    position: absolute;
    right: -5px;
    bottom: 4px;
    width: 8px;
    height: 5px;
    background: #d5d2cf;
    border: 1px solid #8a8785;
    transform: rotate(-40deg);
}
.v-sep {
    width: 1px;
    height: 20px;
    background: #a09d9a;
    margin-left: 6px;
}
.fmt {
    width: 22px;
    text-align: center;
    font-size: 13px;
}
.fmt-small { font-size: 12px; }
.fmt-av { margin-right: 1px; }
.fmt-aa { margin-left: 8px; margin-right: 1px; }
.v-sep-2 { margin-left: 8px; margin-right: 6px; }
.swatch-tool { gap: 6px; margin-right: 9px; }
.font-color {
    width: 16px;
    text-align: center;
    font-size: 13px;
    line-height: 13px;
    color: #3a3a3a;
    border-bottom: 3px solid #555;
}

/* paragraph group */
.para-left {
    padding: 9px 0 0 9px;
    width: 161px;
}
.para-row {
    gap: 0;
    height: 16px;
}
.para-row .caret { margin-left: 7px; }
.para-row-2 {
    margin-top: 15px;
}
.gap-l { margin-left: 8px; }
.gap-m { margin-left: 6px; }
.v-sep-3 { margin: 0 5px 0 5px; }

/* quick access row */
.qat {
    height: 33px;
    flex: none;
    display: flex;
    align-items: center;
    background: #bfbbb7;
    padding-left: 3px;
}
.q {
    flex: none;
    width: 28px;
    height: 28px;
    display: flex;
    align-items: center;
    justify-content: flex-start;
    padding-left: 5px;
    gap: 4px;
}
.q svg {
    width: 18px;
    height: 18px;
}
.qc {
    width: 38px;
    margin-left: -2px;
}
.q-on {
    background: #a09c98;
    outline: 1px solid #8a8785;
    outline-offset: -1px;
}
.font-color-q {
    font-size: 14px;
    margin-left: 2px;
}
.q-more {
    font-size: 12px;
    padding-left: 11px;
}

/* workspace */
.workspace {
    flex: 1;
    display: flex;
    min-height: 0;
}
.thumbs {
    width: 180px;
    flex: none;
    display: flex;
    align-items: flex-start;
    padding: 15px 0 0 13px;
    border-right: 1px solid #7c7c7c;
}
.thumb-num {
    color: #fff;
    font-size: 11px;
    line-height: 14px;
    width: 19px;
}
.thumb {
    width: 129px;
    height: 76px;
    background: #fff;
    border: 3px solid #f2937d;
    box-shadow: inset 0 0 0 1px #5a5a5a;
}
.stage {
    flex: 1;
    padding: 4px 57px 9px 41px;
}
.slide {
    height: 509px;
    background: #fff;
    padding-top: 83px;
    padding-left: 113px;
}
.ph {
    width: 681px;
    border: 1px dotted #c4c4c4;
    text-align: center;
    color: #111;
}
.ph-title {
    height: 179px;
    display: flex;
    align-items: flex-end;
    justify-content: center;
    font-family: 'Lato', sans-serif;
    font-weight: 300;
    font-size: 52px;
    line-height: 60px;
    padding-bottom: 8px;
    -webkit-text-stroke: 0.6px #111;
}
.ph-sub {
    height: 125px;
    margin-top: 5px;
    font-family: 'Lato', sans-serif;
    font-size: 20.7px;
    line-height: 28px;
}

/* status bar */
.statusbar {
    height: 20px;
    flex: none;
    display: flex;
    align-items: center;
    background: #bfbbb7;
    font-size: 9.5px;
    padding-left: 7px;
    color: #4a4a4a;
}
.status-views {
    display: flex;
    margin-left: 834px;
    height: 20px;
}
.view {
    width: 38px;
    display: flex;
    align-items: center;
    justify-content: center;
}
.view-on {
    background: #a7a3a0;
}
.zoom {
    display: flex;
    align-items: center;
    margin-left: 8px;
}
.zoom-btn {
    width: 7px;
    height: 1px;
    background: #8a8785;
}
.zoom-plus {
    position: relative;
}
.zoom-plus::after {
    content: "";
    position: absolute;
    left: 3px;
    top: -3px;
    width: 1px;
    height: 7px;
    background: #8a8785;
}
.zoom-track {
    position: relative;
    width: 96px;
    height: 1px;
    background: #333;
    margin: 0 4px;
}
.zoom-thumb {
    position: absolute;
    left: 33px;
    top: -5px;
    width: 4px;
    height: 11px;
    background: #7d7a77;
}
.zoom-tick {
    position: absolute;
    left: 47px;
    top: -3px;
    width: 1px;
    height: 7px;
    background: #333;
}
.ribbon-collapse {
    position: absolute;
    right: 9px;
    bottom: 0;
    width: 7px;
    height: 7px;
    border-left: 1px solid #333;
    border-top: 1px solid #333;
    transform: rotate(45deg);
}

/* overlays */
.shortcut {
    position: absolute;
    left: 863px;
    top: 510px;
    display: flex;
}
.key {
    height: 54px;
    display: flex;
    align-items: center;
    padding-left: 9px;
    font-family: 'Open Sans', sans-serif;
    font-weight: 300;
    font-size: 17px;
    color: #d0d0d0;
    background: linear-gradient(90deg, #1f1f1f, #3a3b3a);
    border-radius: 10px;
    box-shadow: 0 10px 36px rgba(0, 0, 0, 0.55);
}
.key-ctrl {
    width: 74px;
    margin-right: 14px;
}
.key-shift {
    width: 125px;
    margin-right: 12px;
}
.key-icon {
    width: 54px;
    height: 54px;
    background: #a09c98;
    display: flex;
    align-items: center;
    justify-content: center;
    box-shadow: 0 10px 36px rgba(0, 0, 0, 0.3);
}
.key-icon svg {
    width: 40px;
    height: 40px;
}
.big-arrow {
    position: absolute;
    left: 957px;
    top: 593px;
    width: 86px;
    height: 112px;
    filter: drop-shadow(-5px 6px 18px rgba(0, 0, 0, 0.5));
}
```
